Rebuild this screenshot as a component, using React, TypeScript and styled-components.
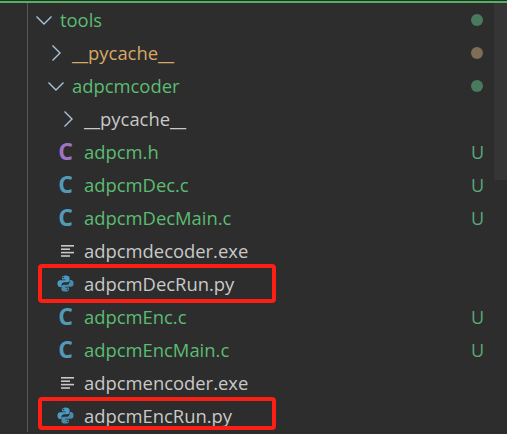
import React from 'react';
import styled, { createGlobalStyle } from 'styled-components';

const GlobalStyle = createGlobalStyle`
  html, body {
    margin: 0;
    padding: 0;
    background: #2d2d2d;
  }
`;

const Panel = styled.div`
  width: 507px;
  height: 434px;
  overflow: hidden;
  position: relative;
  background: #2d2d2d;
  border-top: 1px solid #2d2d2d;
  box-sizing: border-box;
  font-family: 'Open Sans', 'Noto Sans', sans-serif;
  font-size: 18.4px;
`;

const TopLine = styled.div`
  height: 2px;
  background: #4fb35f;
`;

const Tree = styled.div`
  margin-left: 27px;
  border-left: 1px solid #585858;
  display: flex;
  flex-direction: column;
`;

const ScrollThumb = styled.div`
  position: absolute;
  top: 2px;
  right: 0;
  width: 13px;
  height: 177px;
  background: #353535;
`;

const Row = styled.div<{ $depth: number; $mark?: 'tall' | 'short' }>`
  height: 33px;
  flex: none;
  display: flex;
  align-items: center;
  padding-left: ${(p) => 4 + p.$depth * 12}px;
  padding-right: 22px;
  position: relative;

  ${(p) =>
    p.$mark &&
    `&::after {
      content: '';
      position: absolute;
      left: 10px;
      top: ${p.$mark === 'tall' ? -3 : -2}px;
      width: 238px;
      height: ${p.$mark === 'tall' ? 39 : 33}px;
      box-sizing: border-box;
      border: 4px solid #fb1f14;
      border-radius: 4px;
    }`}
`;

const Slot = styled.span`
  width: 24px;
  margin-right: 4px;
  flex: none;
  display: flex;
  justify-content: center;
  align-items: center;
`;

const Name = styled.span<{ $tone: string }>`
  flex: 1;
  line-height: 33px;
  white-space: nowrap;
  color: ${(p) => p.$tone};
`;

const Dot = styled.span<{ $color: string }>`
  width: 12px;
  height: 12px;
  border-radius: 50%;
  background: ${(p) => p.$color};
  margin-right: 2px;
`;

const Badge = styled.span`
  color: #5aa877;
  font-size: 18px;
  width: 14px;
`;

const Chevron = ({ open }: { open: boolean }) => (
  <svg width="18" height="18" viewBox="0 0 18 18" fill="none" stroke="#a9c4dc" strokeWidth="1.4">
    {open ? <path d="M1.5 5.5L9 13l7.5-7.5" /> : <path d="M5.5 1.5L13 9l-7.5 7.5" />}
  </svg>
);

const LetterIcon = styled.span<{ $color: string }>`
  color: ${(p) => p.$color};
  font-size: 23px;
  font-weight: 700;
  line-height: 1;
  margin-right: 5px;
`;

const LinesIcon = () => (
  <svg width="14" height="14" viewBox="0 0 14 14" fill="#c8c8c8">
    <rect x="0" y="1" width="13" height="1.6" />
    <rect x="0" y="4.4" width="9" height="1.6" />
    <rect x="0" y="7.8" width="13" height="1.6" />
    <rect x="0" y="11.2" width="9" height="1.6" />
  </svg>
);

const PythonGlyph = styled.svg`
  margin-right: 5px;
`;

const PythonIcon = () => (
  <PythonGlyph width="17" height="17" viewBox="0 0 16 16">
    <path
      fill="#4b9cc4"
      d="M7.9 0.5C5.6 0.5 4.8 1.4 4.8 2.7V4.3H8.1V4.9H3C1.5 4.9 0.4 6 0.4 8c0 2 1 3.2 2.5 3.2H4.2V9.4c0-1.4 1.2-2.6 2.6-2.6h3c1.1 0 2-.9 2-2V2.7c0-1.2-1.2-2.2-3.9-2.2zM6.2 1.7a.7.7 0 1 1 0 1.4.7.7 0 0 1 0-1.4z"
    />
    <path
      fill="#4b9cc4"
      opacity="0.85"
      d="M8.1 15.5c2.3 0 3.1-.9 3.1-2.2v-1.6H7.9v-.6H13c1.5 0 2.6-1.1 2.6-3.1 0-2-1-3.2-2.5-3.2h-1.3v1.8c0 1.4-1.2 2.6-2.6 2.6h-3c-1.1 0-2 .9-2 2v2.1c0 1.2 1.2 2.2 3.9 2.2zm1.7-1.2a.7.7 0 1 1 0-1.4.7.7 0 0 1 0 1.4z"
    />
  </PythonGlyph>
);

const GREEN = '#5bbd72';
const PLAIN = '#c9c9c9';
const ORANGE = '#d9a866';

type Item = {
  name: string;
  depth: number;
  tone: string;
  open?: boolean;
  kind?: 'h' | 'c' | 'exe' | 'py';
  dot?: string;
  badge?: boolean;
  mark?: 'tall' | 'short';
};

const items: Item[] = [
  { name: 'tools', depth: 0, tone: GREEN, open: true, dot: '#4a7a5e' },
  { name: '__pycache__', depth: 1, tone: ORANGE, open: false, dot: '#7d6e55' },
  { name: 'adpcmcoder', depth: 1, tone: GREEN, open: true, dot: '#4a7a5e' },
  { name: '__pycache__', depth: 2, tone: PLAIN, open: false },
  { name: 'adpcm.h', depth: 2, tone: GREEN, kind: 'h', badge: true },
  { name: 'adpcmDec.c', depth: 2, tone: GREEN, kind: 'c', badge: true },
  { name: 'adpcmDecMain.c', depth: 2, tone: GREEN, kind: 'c', badge: true },
  { name: 'adpcmdecoder.exe', depth: 2, tone: PLAIN, kind: 'exe' },
  { name: 'adpcmDecRun.py', depth: 2, tone: PLAIN, kind: 'py', mark: 'tall' },
  { name: 'adpcmEnc.c', depth: 2, tone: GREEN, kind: 'c', badge: true },
  { name: 'adpcmEncMain.c', depth: 2, tone: GREEN, kind: 'c', badge: true },
  { name: 'adpcmencoder.exe', depth: 2, tone: PLAIN, kind: 'exe' },
  { name: 'adpcmEncRun.py', depth: 2, tone: PLAIN, kind: 'py', mark: 'short' },
];

function renderIcon(item: Item) {
  if (item.kind === 'h') return <LetterIcon $color="#a074c4">C</LetterIcon>;
  if (item.kind === 'c') return <LetterIcon $color="#519aba">C</LetterIcon>;
  if (item.kind === 'exe') return <LinesIcon />;
  if (item.kind === 'py') return <PythonIcon />;
  return <Chevron open={!!item.open} />;
}

export default function App() {
  return (
    <Panel>
      <GlobalStyle />
      <TopLine />
      <ScrollThumb />
      <Tree>
        {items.map((item, i) => (
          <Row key={i} $depth={item.depth} $mark={item.mark}>
            <Slot>{renderIcon(item)}</Slot>
            <Name $tone={item.tone}>{item.name}</Name>
            {item.dot && <Dot $color={item.dot} />}
            {item.badge && <Badge>U</Badge>}
          </Row>
        ))}
      </Tree>
    </Panel>
  );
}
